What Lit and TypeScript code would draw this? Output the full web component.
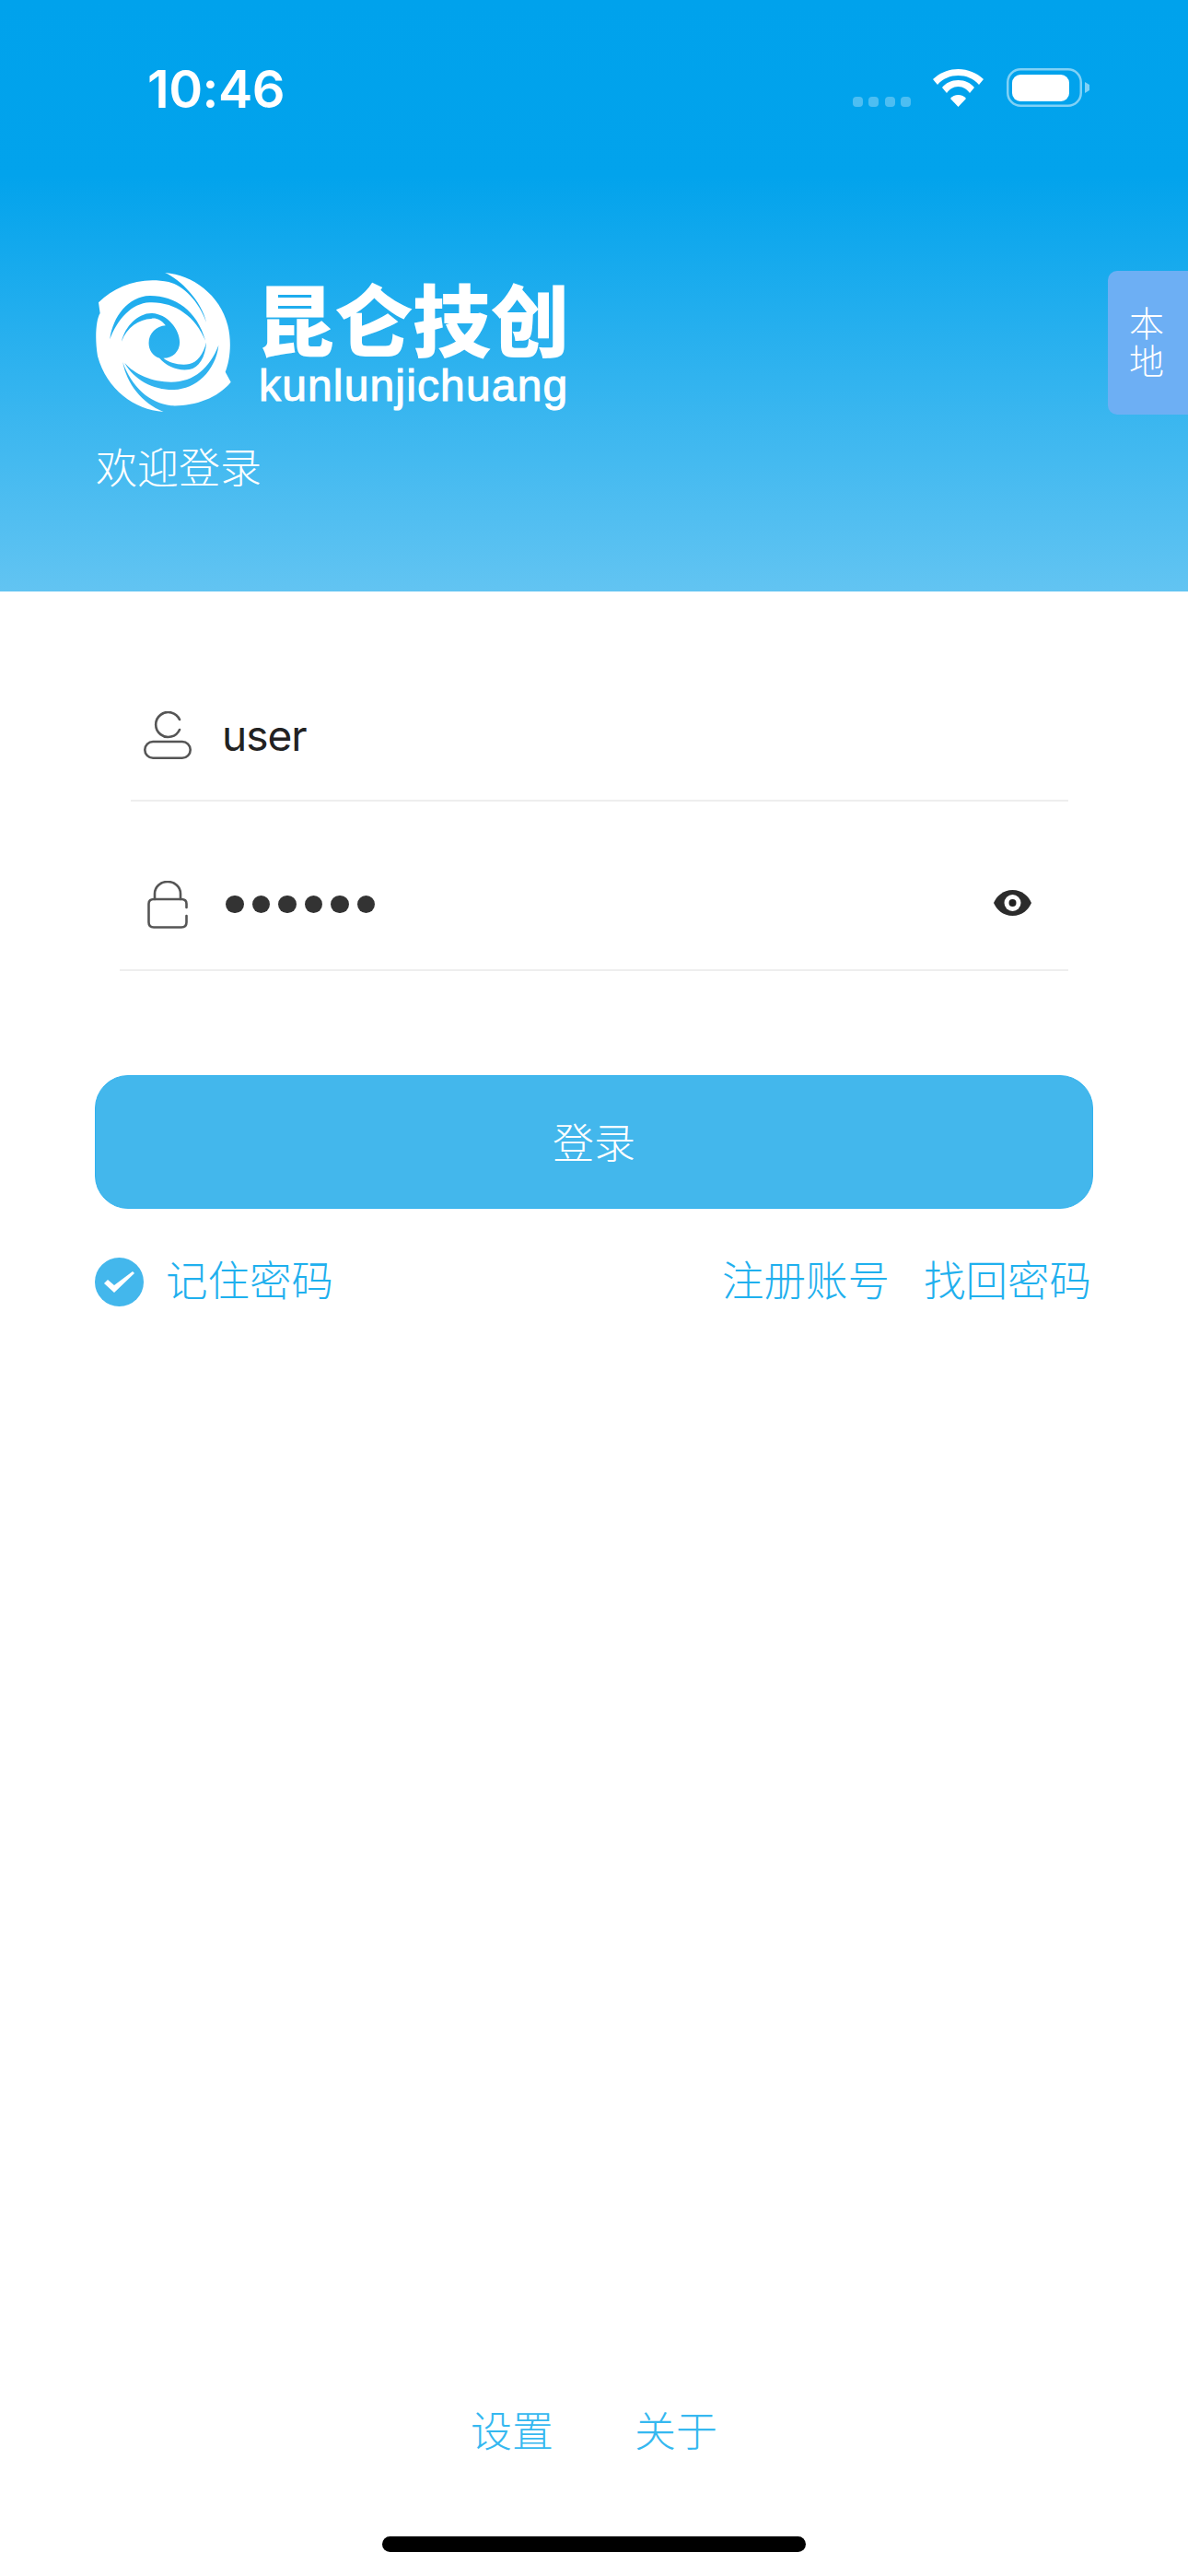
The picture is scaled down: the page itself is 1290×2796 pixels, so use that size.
import { LitElement, html, css } from "lit"
import { customElement } from "lit/decorators.js"

@customElement("app-root")
export class AppRoot extends LitElement {
  static styles = css`
    :host {
      display: block;
      width: 1290px;
      height: 2796px;
      background: #fff;
      font-family: "Inter", "Noto Sans CJK SC", sans-serif;
    }

    .page {
      position: relative;
      display: flex;
      flex-direction: column;
      height: 2796px;
      overflow: hidden;
    }

    /* 顶部 */
    .header {
      height: 642px;
      box-sizing: border-box;
      padding: 0 104px;
      background: linear-gradient(180deg, #00a2ec 0, #02a3ec 190px, #62c4f2 642px);
      color: #fff;
    }

    .status {
      height: 296px;
      margin: 0 -104px;
      padding: 67px 107px 0 160px;
      box-sizing: border-box;
      display: flex;
      align-items: flex-start;
    }

    .time {
      font-size: 56px;
      font-weight: 600;
      line-height: 60px;
      letter-spacing: -0.5px;
      flex: 1;
    }

    .status-icons {
      display: flex;
      align-items: flex-end;
      height: 42px;
      margin-top: 7px;
    }

    .signal {
      display: flex;
      gap: 6.5px;
      margin-right: 24px;
    }

    .signal i {
      width: 11px;
      height: 11px;
      border-radius: 4px;
      background: rgba(255, 255, 255, 0.3);
    }

    .wifi {
      display: block;
      margin-right: 25px;
    }

    .battery {
      display: block;
    }

    .brand {
      display: flex;
      align-items: flex-start;
      gap: 28px;
    }

    .brand-mark {
      display: block;
      flex: none;
    }

    .brand-text {
      display: flex;
      flex-direction: column;
      padding-top: 6px;
    }

    .brand-cn {
      font-family: "Noto Sans CJK SC", sans-serif;
      font-size: 85px;
      font-weight: 900;
      line-height: 84px;
      height: 84px;
      margin-left: -3px;
      white-space: nowrap;
    }

    .brand-en {
      margin-top: 10px;
      font-family: "Liberation Sans", sans-serif;
      font-size: 48px;
      line-height: 46px;
      letter-spacing: 1.15px;
      -webkit-text-stroke: 1px #fff;
      white-space: nowrap;
    }

    .welcome {
      margin-top: 31px;
      font-size: 45px;
      line-height: 62px;
      font-weight: 300;
    }

    .source-tab {
      position: absolute;
      top: 294px;
      right: 0;
      width: 87px;
      height: 156px;
      box-sizing: border-box;
      padding: 37px 26px 0 23px;
      background: #6daff4;
      border-radius: 10px 0 0 10px;
      color: #fff;
      font-size: 38px;
      line-height: 41px;
      font-weight: 300;
      text-align: center;
    }

    /* 表单 */
    .form {
      padding: 124px 103px 0;
      display: flex;
      flex-direction: column;
    }

    .field {
      display: flex;
      align-items: center;
      border-bottom: 2px solid #eeeeee;
    }

    .field-user {
      height: 64px;
      margin: 0 27px 0 39px;
      padding: 0 0 38px 14px;
    }

    .field-pwd {
      height: 99px;
      margin: 62px 27px 0;
      padding: 0 0 21px 30px;
    }

    .field svg {
      display: block;
      flex: none;
    }

    .user-name {
      margin-left: 33px;
      font-size: 46px;
      letter-spacing: -1px;
      color: #222;
    }

    .dots {
      display: flex;
      gap: 9px;
      margin-left: 41px;
      flex: 1;
    }

    .dots i {
      width: 19.5px;
      height: 19.5px;
      border-radius: 50%;
      background: #333;
    }

    .field .eye {
      margin: -4px 40px 0 0;
    }

    .login {
      margin-top: 113px;
      height: 145px;
      box-sizing: border-box;
      padding-bottom: 3px;
      border: 1px solid #2fb1ee;
      border-radius: 36px;
      background: #43b7ec;
      color: #fff;
      font-size: 45px;
      font-weight: 300;
      display: flex;
      align-items: center;
      justify-content: center;
    }

    .links {
      margin-top: 52px;
      display: flex;
      align-items: center;
      color: #1fb0ee;
      font-size: 45.5px;
      font-weight: 300;
      line-height: 53px;
    }

    .links span {
      padding-bottom: 2px;
    }

    .remember {
      display: flex;
      align-items: center;
      gap: 24px;
      flex: 1;
    }

    .links > span + span {
      margin-left: 37px;
      margin-right: 2px;
    }

    .footer {
      margin-top: auto;
      display: flex;
      justify-content: center;
      gap: 88px;
      color: #35b8f0;
      font-size: 45px;
      font-weight: 300;
      line-height: 62px;
      padding-bottom: 125px;
    }

    .home-bar {
      position: absolute;
      left: 415px;
      bottom: 26px;
      width: 460px;
      height: 17px;
      border-radius: 9px;
      background: #000;
    }
  `

  render() {
    return html`
      <div class="page">
        <div class="header">
          <div class="status">
            <div class="time">10:46</div>
            <div class="status-icons">
              <div class="signal"><i></i><i></i><i></i><i></i></div>
              <svg class="wifi" width="55" height="41" viewBox="0 0 55 41" fill="#fff">
                <path d="M27.500 0C17 0 7.500 4 0 11L5 17C11 10 19 7 27.500 7C36 7 44 10 50 17L55 11C47.500 4 38 0 27.500 0z" />
                <path d="M27.500 12C20 12 14 15 10 20L15 26C18 22 22 19 27.500 19C33 19 37 22 40 26L45 20C41 15 35 12 27.500 12z" />
                <path d="M27.500 28C24 28 21 29.500 19 32L27.500 41L36 32C34 29.500 31 28 27.500 28z" />
              </svg>
              <svg class="battery" width="90" height="42" viewBox="0 0 90 42">
                <rect x="1.250" y="1.250" width="79.500" height="39.500" rx="14" fill="none" stroke="#fff" stroke-opacity=".5" stroke-width="2.500" />
                <rect x="6" y="7" width="62" height="29" rx="9" fill="#fff" />
                <path d="M85 15l5 3v6l-5 3z" fill="#fff" fill-opacity=".5" />
              </svg>
            </div>
          </div>
          <div class="brand">
            <svg class="brand-mark" width="149" height="151" viewBox="25 18 446 454">
              <path
                fill="#fff"
                fill-rule="evenodd"
                d="M250 18C340 25 430 90 455 190C470 250 460 310 447 342L465 375C420 430 340 455 270 452C200 445 140 390 112 310C125 380 175 445 245 472C150 465 60 400 30 290C20 230 25 170 38 150L33 115C90 60 170 30 262 48C310 60 360 110 385 180C370 110 300 40 250 18z
                M70 235C95 170 140 118 200 115C280 112 350 160 382 240C355 140 280 92 200 93C130 95 80 160 70 235z
                M118 312C150 370 215 402 280 400C350 398 415 340 425 255C395 330 345 375 270 375C210 375 150 350 118 312z
                M108 243C120 190 165 148 208 150C255 152 298 200 298 245C298 275 275 297 245 297C262 312 300 322 330 316C355 310 375 285 385 245C382 295 360 328 330 334C295 340 255 325 232 297C210 290 197 270 197 247C197 215 222 192 252 190C235 170 220 165 205 168C165 170 125 195 108 243z"
              />
            </svg>
            <div class="brand-text">
              <div class="brand-cn">昆仑技创</div>
              <div class="brand-en">kunlunjichuang</div>
            </div>
          </div>
          <div class="welcome">欢迎登录</div>
        </div>
        <div class="source-tab">本地</div>

        <div class="form">
          <div class="field field-user">
            <svg width="52" height="52" viewBox="0 0 52 52" fill="none" stroke="#555" stroke-width="2.600">
              <path d="M39 9A13.500 13.500 0 1 0 39 20" stroke-linecap="round" />
              <rect x="1.300" y="33" width="49.400" height="17.700" rx="8.800" />
            </svg>
            <div class="user-name">user</div>
          </div>
          <div class="field field-pwd">
            <svg width="44" height="52" viewBox="0 0 44 52" fill="none" stroke="#555" stroke-width="2.600" stroke-linecap="round">
              <path d="M8 20V14A14 13 0 0 1 36 14V20" />
              <path d="M42.500 29V25Q42.500 20 37 20H7Q1.500 20 1.500 25V45Q1.500 50.500 7 50.500H37Q42.500 50.500 42.500 45V38" />
            </svg>
            <div class="dots"><i></i><i></i><i></i><i></i><i></i><i></i></div>
            <svg class="eye" width="41" height="28" viewBox="0 0 41 28">
              <path fill="#2b2b2b" d="M20.500 0C31 0 38 7 41 14c-3 7-10 14-20.500 14S3 21 0 14C3 7 10 0 20.500 0z" />
              <circle cx="20.500" cy="14" r="9" fill="#fff" />
              <circle cx="20.500" cy="14" r="4" fill="#222" />
            </svg>
          </div>

          <div class="login">登录</div>

          <div class="links">
            <div class="remember">
              <svg width="53" height="53" viewBox="0 0 53 53">
                <circle cx="26.500" cy="26.500" r="26.500" fill="#43b7ec" />
                <path d="M10 28L14 24L21 30L41 15L43 17L21 38z" fill="#fff" />
              </svg>
              <span>记住密码</span>
            </div>
            <span>注册账号</span>
            <span>找回密码</span>
          </div>
        </div>

        <div class="footer">
          <span>设置</span>
          <span>关于</span>
        </div>
        <div class="home-bar"></div>
      </div>
    `
  }
}
